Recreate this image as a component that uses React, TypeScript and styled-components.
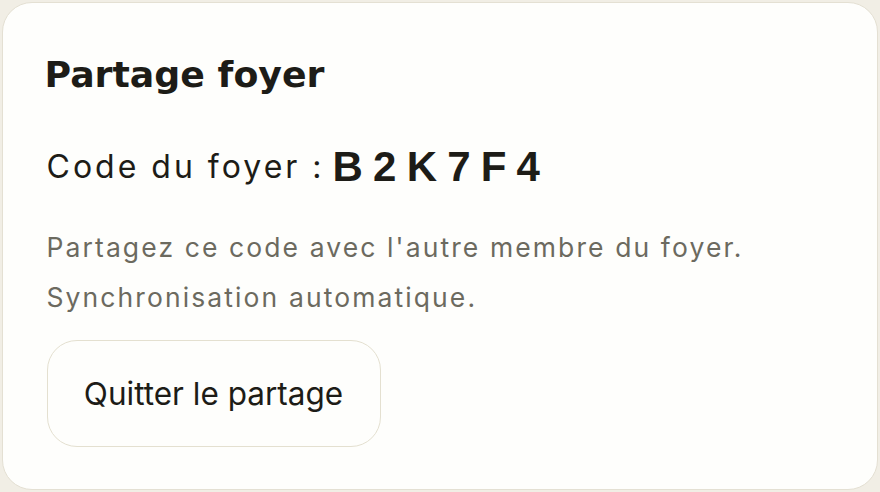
import React from "react";
import styled, { createGlobalStyle } from "styled-components";

const GlobalStyle = createGlobalStyle`
  html, body {
    margin: 0;
    padding: 0;
    background: #f1eee5;
  }
  body {
    font-family: Inter, "Noto Sans", sans-serif;
  }
`;

const Page = styled.div`
  width: 880px;
  height: 492px;
  padding: 2px;
  box-sizing: border-box;
`;

const Card = styled.section`
  height: 100%;
  box-sizing: border-box;
  background: #fefefc;
  border: 1.5px solid #e4e0d3;
  border-radius: 30px;
  padding: 49.5px 43.5px 0;
  display: flex;
  flex-direction: column;
  align-items: flex-start;
`;

const Title = styled.h2`
  margin: 0 0 0 -2px;
  font-family: "DejaVu Sans", Inter, sans-serif;
  font-size: 36.3px;
  line-height: 44px;
  font-weight: 700;
  color: #1d1c17;
`;

const CodeLine = styled.div`
  margin-top: 46px;
  height: 48px;
  display: flex;
  align-items: center;
  gap: 8px;
  color: #1d1c17;
`;

const Label = styled.span`
  font-size: 32px;
  line-height: 48px;
  letter-spacing: 3px;
`;

const Code = styled.span`
  font-family: "Liberation Sans", Arial, sans-serif;
  font-weight: 700;
  font-size: 42px;
  line-height: 48px;
  letter-spacing: 10.2px;
`;

const Description = styled.p`
  margin: 31.5px 0 0;
  font-size: 26.5px;
  line-height: 50px;
  letter-spacing: 2.1px;
  color: #6c6a5f;
`;

const LeaveButton = styled.button`
  flex-shrink: 0;
  margin-top: 18px;
  width: 334px;
  height: 107px;
  padding: 0;
  background: #fefefc;
  border: 1.5px solid #e4e0d0;
  border-radius: 30px;
  font-family: Inter, "Noto Sans", sans-serif;
  font-size: 31.5px;
  color: #1d1c17;
  cursor: pointer;
`;

export default function App() {
  return (
    <Page>
      <GlobalStyle />
      <Card>
        <Title>Partage foyer</Title>
        <CodeLine>
          <Label>Code du foyer :</Label>
          <Code>B2K7F4</Code>
        </CodeLine>
        <Description>
          Partagez ce code avec l'autre membre du foyer.
          <br />
          Synchronisation automatique.
        </Description>
        <LeaveButton>Quitter le partage</LeaveButton>
      </Card>
    </Page>
  );
}
